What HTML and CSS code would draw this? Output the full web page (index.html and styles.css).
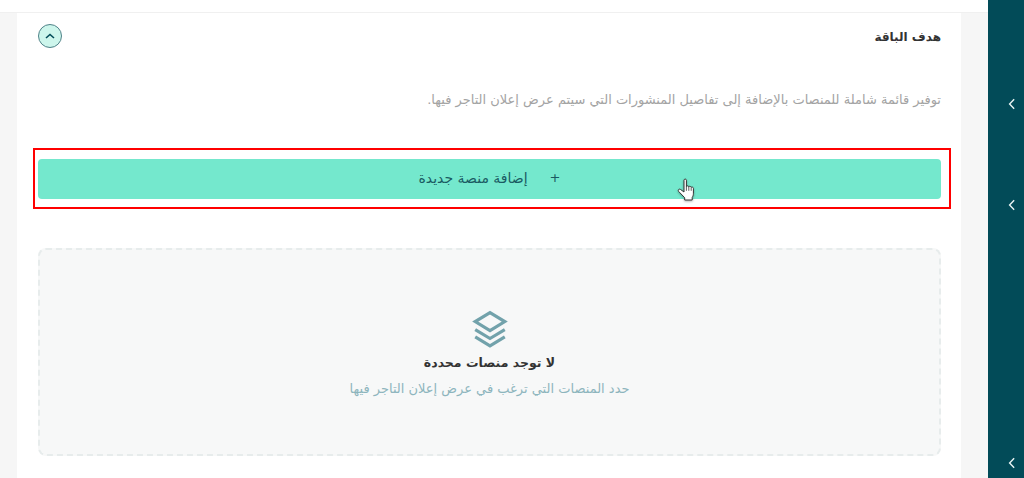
FILE: index.html
```html
<!DOCTYPE html>
<html lang="ar" dir="rtl">
<head>
  <meta charset="UTF-8">
  <meta name="viewport" content="width=device-width, initial-scale=1.0">
  <title>هدف الباقة</title>
  <link rel="stylesheet" href="styles.css">
</head>
<body>
  <aside class="sidebar">
    <svg class="side-arrow" viewBox="0 0 8 10"><path d="M5.800 1 2 5l3.800 4"/></svg>
    <svg class="side-arrow" viewBox="0 0 8 10"><path d="M5.800 1 2 5l3.800 4"/></svg>
    <svg class="side-arrow side-arrow-last" viewBox="0 0 8 10"><path d="M5.800 1 2 5l3.800 4"/></svg>
  </aside>

  <div class="main">
    <div class="top-strip"></div>
    <div class="content">
      <section class="card">
        <div class="card-header">
          <h2 class="card-title">هدف الباقة</h2>
          <button class="toggle" type="button">
            <svg viewBox="0 0 12 8"><path d="M2 6 6 2.500 10 6"/></svg>
          </button>
        </div>

        <p class="card-desc">توفير قائمة شاملة للمنصات بالإضافة إلى تفاصيل المنشورات التي سيتم عرض إعلان التاجر فيها.</p>

        <div class="add-row">
          <button class="add-btn" type="button">
            <span class="add-plus">+</span>
            <span>إضافة منصة جديدة</span>
          </button>
          <div class="highlight"></div>
          <svg class="hand" viewBox="0 0 20 24">
            <path d="M7 2.200c0-1.500 2.400-1.500 2.400 0v6.400c.3-1 2.300-1 2.400.3.400-.9 2.200-.8 2.400.5.500-.7 2.100-.4 2.200 1v4.800c0 2.200-.6 3.200-1.200 4.300v2.500H7.700v-2.300L1.600 13.400c-1.100-1.400.7-3 2-1.900L7 14z"/>
            <path class="hand-line" d="M9.400 8.600v4.200M11.800 9v3.800M14.200 9.500v3.300"/>
          </svg>
        </div>

        <div class="empty-box">
          <svg class="empty-icon" viewBox="0 0 36 36">
            <path d="M18 2.500 32 11 18 19.500 4 11z"/>
            <path d="M4 18.500 18 27l14-8.500"/>
            <path d="M4 25.500 18 34l14-8.500"/>
          </svg>
          <h3 class="empty-title">لا توجد منصات محددة</h3>
          <p class="empty-sub">حدد المنصات التي ترغب في عرض إعلان التاجر فيها</p>
        </div>
      </section>
    </div>
  </div>
</body>
</html>
```

FILE: styles.css
```css
:root {
  --dark-teal: #024b58;
  --mint: #74e8cd;
  --page-bg: #f6f6f6;
}

* {
  margin: 0;
  padding: 0;
  box-sizing: border-box;
}

html, body {
  height: 100%;
  overflow: hidden;
}

body {
  display: flex;
  background: #fff;
  font-family: "DejaVu Sans", "Noto Sans", sans-serif;
  color: #2f3a3d;
}

.sidebar {
  width: 36px;
  flex-shrink: 0;
  height: 478px;
  background: var(--dark-teal);
  display: flex;
  flex-direction: column;
  align-items: flex-start;
  padding-top: 98px;
  padding-right: 7px;
  gap: 89px;
}

.side-arrow {
  width: 10px;
  height: 12px;
  fill: none;
  stroke: #e8f3f3;
  stroke-width: 1.2;
}

.side-arrow-last {
  margin-top: auto;
  margin-bottom: 9px;
}

.main {
  flex: 1;
  height: 478px;
  display: flex;
  flex-direction: column;
  min-width: 0;
}

.top-strip {
  height: 13px;
  background: #fff;
  border-bottom: 1px solid #f0f0f0;
  flex-shrink: 0;
}

.content {
  flex: 1;
  background: var(--page-bg);
  padding: 0 27px 0 17px;
  min-height: 0;
}

.card {
  background: #fff;
  height: 100%;
  padding: 11px 20px 0 21px;
}

.card-header {
  display: flex;
  justify-content: space-between;
  align-items: center;
  height: 24px;
}

.card-title {
  font-size: 12px;
  font-weight: 600;
  color: #333;
  padding-top: 1px;
}

.toggle {
  width: 24px;
  height: 24px;
  border-radius: 50%;
  border: 1px solid #4f8288;
  background: #cdf6ec;
  display: flex;
  align-items: center;
  justify-content: center;
}

.toggle svg {
  width: 12px;
  height: 8px;
  fill: none;
  stroke: var(--dark-teal);
  stroke-width: 1.6;
}

.card-desc {
  margin-top: 42px;
  font-size: 13px;
  line-height: 20px;
  color: #a3a3a3;
}

.add-row {
  position: relative;
  margin-top: 49px;
}

.add-btn {
  width: 100%;
  height: 40px;
  padding-bottom: 3px;
  background: var(--mint);
  border: none;
  border-radius: 4px;
  display: flex;
  align-items: center;
  justify-content: center;
  gap: 22px;
  font: inherit;
  font-size: 14px;
  color: #1a5a62;
}

.add-plus {
  font-size: 13px;
}

.highlight {
  position: absolute;
  top: -11px;
  bottom: -10px;
  right: -10px;
  left: -5px;
  border: 2px solid #f00;
}

.hand {
  position: absolute;
  left: 639px;
  top: 19px;
  width: 20px;
  height: 24px;
  fill: #fff;
  stroke: #333;
  stroke-width: 1;
  filter: drop-shadow(0 1px 1px rgba(0, 0, 0, 0.3));
}

.hand-line {
  fill: none;
  stroke-width: 0.8;
}

.empty-box {
  margin-top: 49px;
  height: 208px;
  background: #f7f8f8;
  border: 2px dashed #e7ecec;
  border-radius: 8px;
  display: flex;
  flex-direction: column;
  align-items: center;
  padding-top: 60px;
}

.empty-icon {
  width: 38px;
  height: 38px;
  fill: none;
  stroke: #72a2ab;
  stroke-width: 3;
}

.empty-title {
  margin-top: 5px;
  font-size: 12.5px;
  font-weight: 600;
  line-height: 20px;
  color: #333;
}

.empty-sub {
  margin-top: 6px;
  font-size: 13px;
  line-height: 20px;
  color: #8db5bd;
}
```
